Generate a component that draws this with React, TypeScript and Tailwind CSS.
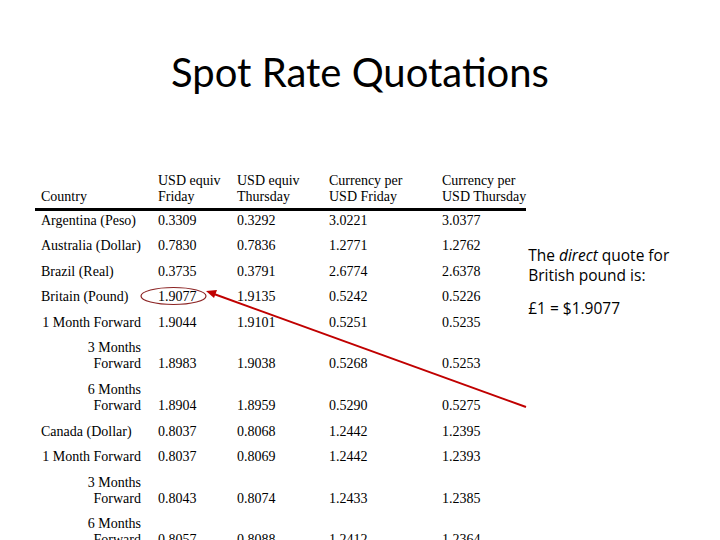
import React from "react";

type Row = { label: string[]; sub?: boolean; v: string[] };

const rows: Row[] = [
  { label: ["Argentina (Peso)"], v: ["0.3309", "0.3292", "3.0221", "3.0377"] },
  { label: ["Australia (Dollar)"], v: ["0.7830", "0.7836", "1.2771", "1.2762"] },
  { label: ["Brazil (Real)"], v: ["0.3735", "0.3791", "2.6774", "2.6378"] },
  { label: ["Britain (Pound)"], v: ["1.9077", "1.9135", "0.5242", "0.5226"] },
  { label: ["1 Month Forward"], sub: true, v: ["1.9044", "1.9101", "0.5251", "0.5235"] },
  { label: ["3 Months", "Forward"], sub: true, v: ["1.8983", "1.9038", "0.5268", "0.5253"] },
  { label: ["6 Months", "Forward"], sub: true, v: ["1.8904", "1.8959", "0.5290", "0.5275"] },
  { label: ["Canada (Dollar)"], v: ["0.8037", "0.8068", "1.2442", "1.2395"] },
  { label: ["1 Month Forward"], sub: true, v: ["0.8037", "0.8069", "1.2442", "1.2393"] },
  { label: ["3 Months", "Forward"], sub: true, v: ["0.8043", "0.8074", "1.2433", "1.2385"] },
  { label: ["6 Months", "Forward"], sub: true, v: ["0.8057", "0.8088", "1.2412", "1.2364"] },
];

export default function App() {
  return (
    <div className="relative w-[720px] h-[540px] bg-white overflow-hidden text-black">
      <h1 className="pt-[45px] text-center text-[40px] leading-[54px] font-['Lato','Open_Sans',sans-serif]">
        Spot Rate Quotations
      </h1>
      <div className="flex mt-[74px]">
        <table className="ml-[35px] border-collapse table-fixed font-['Liberation_Serif',serif] text-[14px] leading-[16px]">
          <colgroup>
            <col className="w-[117px]" />
            <col className="w-[79px]" />
            <col className="w-[92px]" />
            <col className="w-[113px]" />
            <col className="w-[90px]" />
          </colgroup>
          <thead>
            <tr className="border-b-[3px] border-black">
              <th className="font-normal text-left align-bottom pl-[6px] pb-[3px]">Country</th>
              <th className="font-normal text-left align-bottom pl-[6px] pb-[3px] whitespace-nowrap">USD equiv<br />Friday</th>
              <th className="font-normal text-left align-bottom pl-[6px] pb-[3px] whitespace-nowrap">USD equiv<br />Thursday</th>
              <th className="font-normal text-left align-bottom pl-[6px] pb-[3px] whitespace-nowrap">Currency per<br />USD Friday</th>
              <th className="font-normal text-left align-bottom pl-[6px] pb-[3px] whitespace-nowrap">Currency per<br />USD Thursday</th>
            </tr>
          </thead>
          <tbody>
            {rows.map((r, i) => (
              <tr key={i}>
                <td className={`align-bottom pt-[1.5px] pb-[8.1px] ${r.sub ? "text-right pr-[11px]" : "text-left pl-[6px]"} whitespace-nowrap`}>
                  {r.label.map((l, j) => (
                    <div key={j}>{l}</div>
                  ))}
                </td>
                {r.v.map((v, j) => (
                  <td key={j} className="align-bottom pt-[1.5px] pb-[8.1px] pl-[6px] text-left">
                    {v}
                  </td>
                ))}
              </tr>
            ))}
          </tbody>
        </table>
        <div className="ml-[2px] mt-[72px] font-['Open_Sans',sans-serif] text-[15.5px] leading-[20px]">
          <p>
            The <i>direct</i> quote for
            <br />
            British pound is:
          </p>
          <p className="mt-[13px]">£1 = $1.9077</p>
        </div>
      </div>
      <svg className="absolute left-0 top-0 pointer-events-none" width="720" height="540" viewBox="0 0 720 540">
        <ellipse cx="173.5" cy="296" rx="32.5" ry="8.5" fill="none" stroke="#8b2323" strokeWidth="1.2" />
        <line x1="526" y1="407" x2="214" y2="294" stroke="#c00000" strokeWidth="2" />
        <polygon points="206,291 217,290 214,298" fill="#c00000" />
      </svg>
    </div>
  );
}
